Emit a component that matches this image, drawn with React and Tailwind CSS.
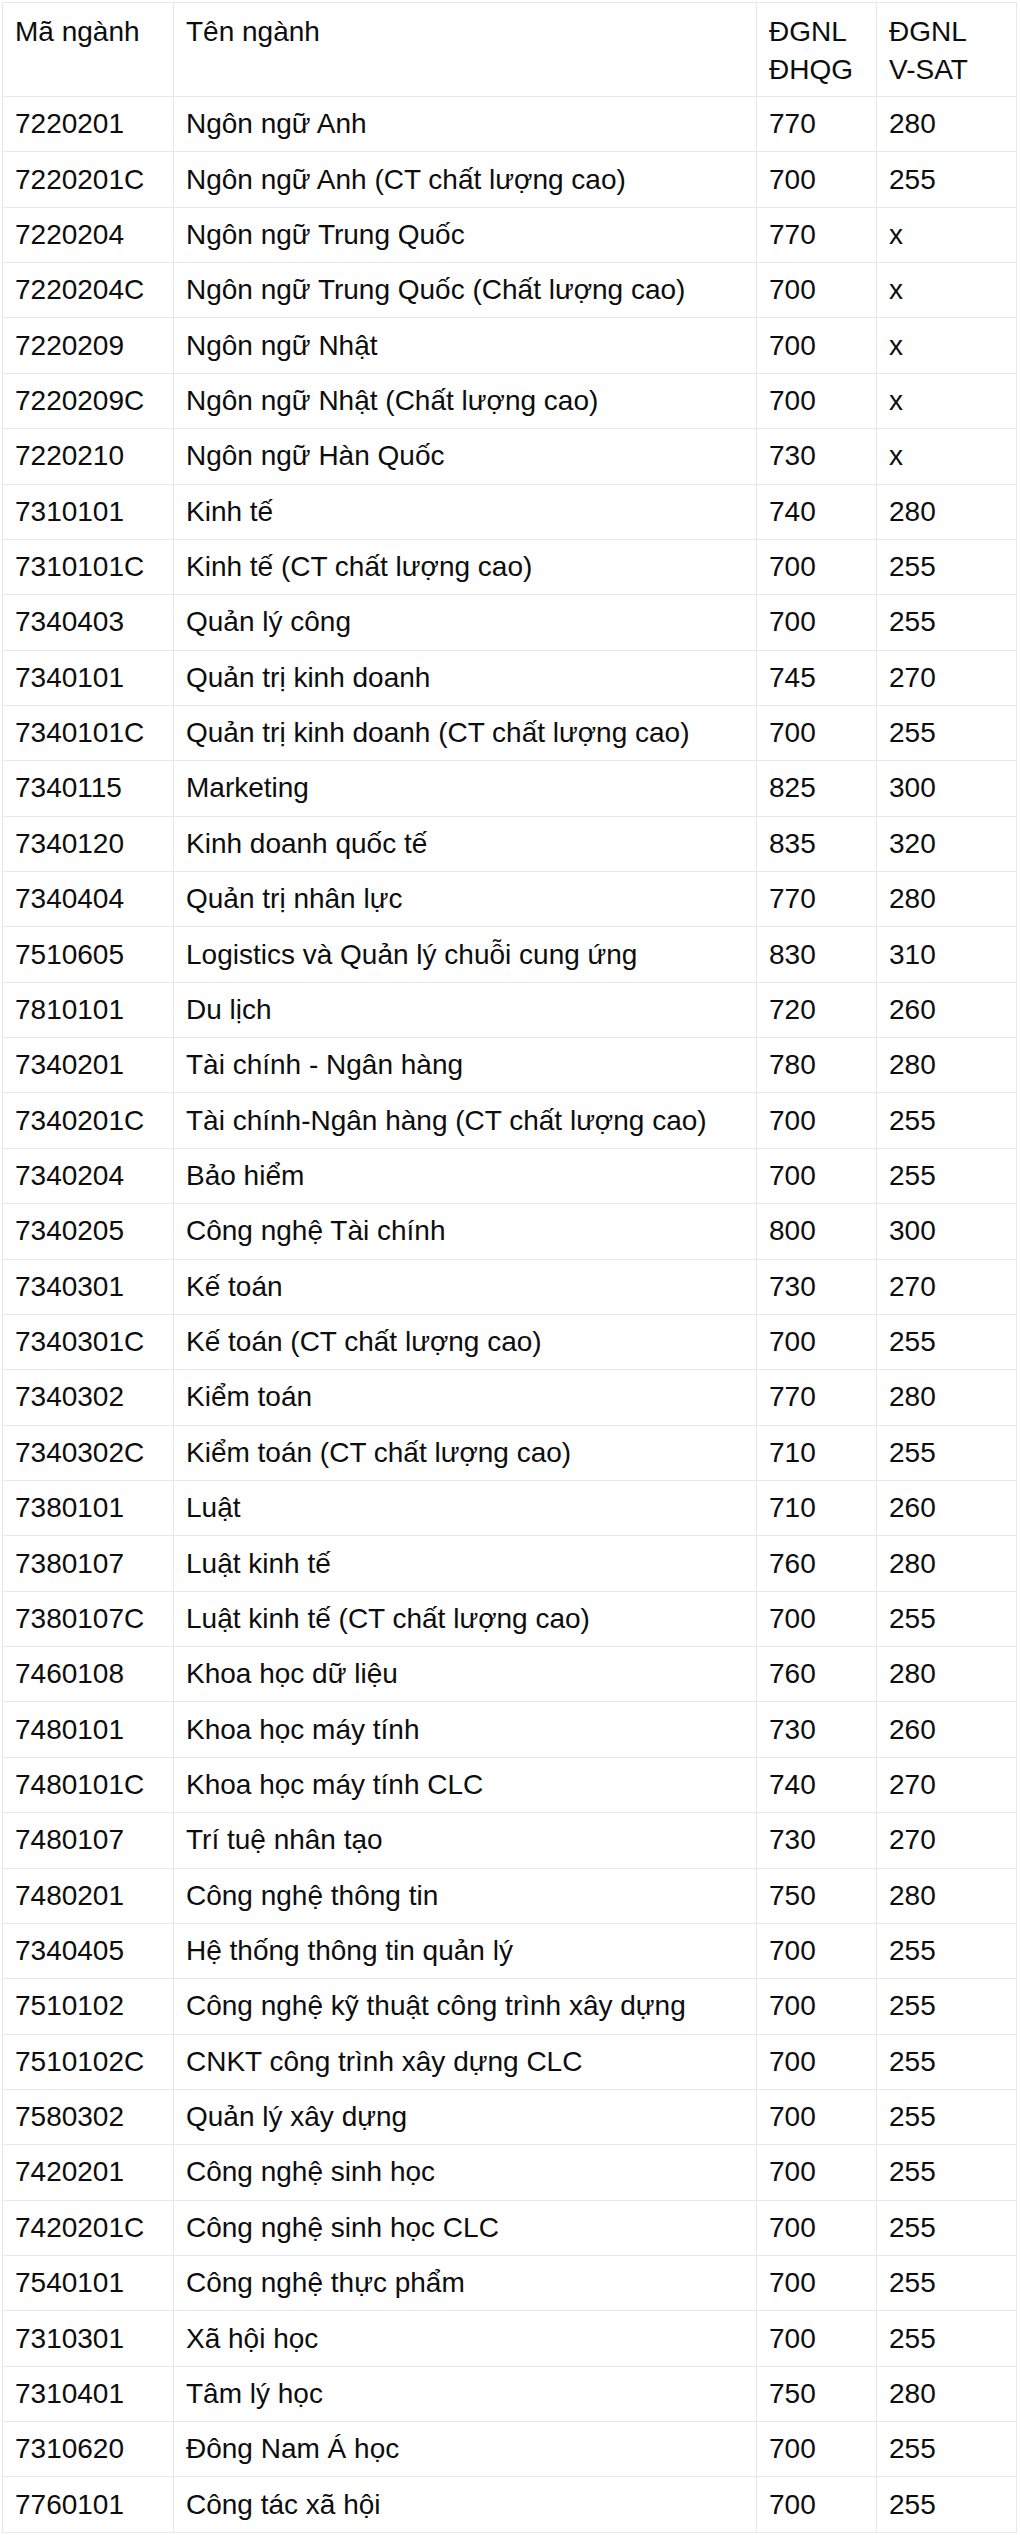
import React from 'react';

const rows = [
  ['7220201', 'Ngôn ngữ Anh', '770', '280'],
  ['7220201C', 'Ngôn ngữ Anh (CT chất lượng cao)', '700', '255'],
  ['7220204', 'Ngôn ngữ Trung Quốc', '770', 'x'],
  ['7220204C', 'Ngôn ngữ Trung Quốc (Chất lượng cao)', '700', 'x'],
  ['7220209', 'Ngôn ngữ Nhật', '700', 'x'],
  ['7220209C', 'Ngôn ngữ Nhật (Chất lượng cao)', '700', 'x'],
  ['7220210', 'Ngôn ngữ Hàn Quốc', '730', 'x'],
  ['7310101', 'Kinh tế', '740', '280'],
  ['7310101C', 'Kinh tế (CT chất lượng cao)', '700', '255'],
  ['7340403', 'Quản lý công', '700', '255'],
  ['7340101', 'Quản trị kinh doanh', '745', '270'],
  ['7340101C', 'Quản trị kinh doanh (CT chất lượng cao)', '700', '255'],
  ['7340115', 'Marketing', '825', '300'],
  ['7340120', 'Kinh doanh quốc tế', '835', '320'],
  ['7340404', 'Quản trị nhân lực', '770', '280'],
  ['7510605', 'Logistics và Quản lý chuỗi cung ứng', '830', '310'],
  ['7810101', 'Du lịch', '720', '260'],
  ['7340201', 'Tài chính - Ngân hàng', '780', '280'],
  ['7340201C', 'Tài chính-Ngân hàng (CT chất lượng cao)', '700', '255'],
  ['7340204', 'Bảo hiểm', '700', '255'],
  ['7340205', 'Công nghệ Tài chính', '800', '300'],
  ['7340301', 'Kế toán', '730', '270'],
  ['7340301C', 'Kế toán (CT chất lượng cao)', '700', '255'],
  ['7340302', 'Kiểm toán', '770', '280'],
  ['7340302C', 'Kiểm toán (CT chất lượng cao)', '710', '255'],
  ['7380101', 'Luật', '710', '260'],
  ['7380107', 'Luật kinh tế', '760', '280'],
  ['7380107C', 'Luật kinh tế (CT chất lượng cao)', '700', '255'],
  ['7460108', 'Khoa học dữ liệu', '760', '280'],
  ['7480101', 'Khoa học máy tính', '730', '260'],
  ['7480101C', 'Khoa học máy tính CLC', '740', '270'],
  ['7480107', 'Trí tuệ nhân tạo', '730', '270'],
  ['7480201', 'Công nghệ thông tin', '750', '280'],
  ['7340405', 'Hệ thống thông tin quản lý', '700', '255'],
  ['7510102', 'Công nghệ kỹ thuật công trình xây dựng', '700', '255'],
  ['7510102C', 'CNKT công trình xây dựng CLC', '700', '255'],
  ['7580302', 'Quản lý xây dựng', '700', '255'],
  ['7420201', 'Công nghệ sinh học', '700', '255'],
  ['7420201C', 'Công nghệ sinh học CLC', '700', '255'],
  ['7540101', 'Công nghệ thực phẩm', '700', '255'],
  ['7310301', 'Xã hội học', '700', '255'],
  ['7310401', 'Tâm lý học', '750', '280'],
  ['7310620', 'Đông Nam Á học', '700', '255'],
  ['7760101', 'Công tác xã hội', '700', '255'],
];

const th = 'border border-[#e8e8e8] align-top text-left font-normal px-[12px] pt-[10px] pb-[6px] leading-[38px]';
const td = 'border border-[#e8e8e8] align-middle px-[12px] h-[55.36px] leading-[32px] whitespace-nowrap';

export default function App() {
  return (
    <div className="min-h-[2535px] bg-white pt-[2px] pl-[2px] text-[#0d0d0d] text-[28px]" style={{ fontFamily: '"Liberation Sans", Arial, sans-serif' }}>
      <table className="table-fixed border-collapse w-[1014px]">
        <thead>
          <tr className="h-[94px]">
            <th className={`${th} w-[171px]`}>Mã ngành</th>
            <th className={`${th} w-[583px]`}>Tên ngành</th>
            <th className={`${th} w-[120px]`}>ĐGNL<br />ĐHQG</th>
            <th className={`${th} w-[140px]`}>ĐGNL<br />V-SAT</th>
          </tr>
        </thead>
        <tbody>
          {rows.map((r) => (
            <tr key={r[0]}>
              <td className={td}>{r[0]}</td>
              <td className={td}>{r[1]}</td>
              <td className={td}>{r[2]}</td>
              <td className={td}>{r[3]}</td>
            </tr>
          ))}
        </tbody>
      </table>
    </div>
  );
}
